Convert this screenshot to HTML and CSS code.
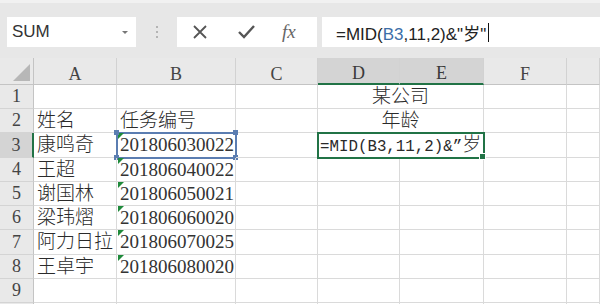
FILE: index.html
```html
<!DOCTYPE html>
<html lang="zh-CN">
<head>
    <meta charset="UTF-8">
    <title>SUM - Excel</title>
    <link rel="stylesheet" href="styles.css">
</head>
<body>
    <!-- Formula bar -->
    <div class="toolbar">
        <div class="name-box">
            <span>SUM</span>
            <span class="caret"></span>
        </div>
        <div class="grip"><i></i><i></i><i></i></div>
        <div class="fx-box">
            <svg width="14" height="14" viewBox="0 0 14 14"><path d="M1 1 L13 13 M13 1 L1 13" stroke="#555" stroke-width="1.8" fill="none"/></svg>
            <svg width="17" height="14" viewBox="0 0 17 14"><path d="M1 7 L6 12 L16 1" stroke="#555" stroke-width="2.4" fill="none"/></svg>
            <span class="fx">fx</span>
        </div>
        <div class="formula">
            <span>=MID(<span class="ref">B3</span>,11,2)&amp;"岁"</span><span class="cursor"></span>
        </div>
    </div>

    <!-- Sheet -->
    <div class="sheet">
        <div class="corner"><span class="tri"></span></div>
        <div class="col-head">A</div>
        <div class="col-head">B</div>
        <div class="col-head">C</div>
        <div class="col-head active">D</div>
        <div class="col-head active">E</div>
        <div class="col-head">F</div>
        <div class="col-head"></div>

        <div class="row-head">1</div>
        <div class="cell"></div><div class="cell"></div><div class="cell"></div>
        <div class="cell merged">某公司</div>
        <div class="cell"></div><div class="cell"></div>

        <div class="row-head">2</div>
        <div class="cell">姓名</div><div class="cell">任务编号</div><div class="cell"></div>
        <div class="cell merged">年龄</div>
        <div class="cell"></div><div class="cell"></div>

        <div class="row-head active">3</div>
        <div class="cell">康鸣奇</div>
        <div class="cell num ref-cell">201806030022<i class="h tl"></i><i class="h tr"></i><i class="h bl"></i><i class="h br"></i></div>
        <div class="cell"></div>
        <div class="cell merged editing"><span class="mono">=MID(B3,11,2)&amp;”</span>岁<i class="fill"></i></div>
        <div class="cell"></div><div class="cell"></div>

        <div class="row-head">4</div>
        <div class="cell">王超</div><div class="cell num">201806040022</div>
        <div class="cell"></div><div class="cell"></div><div class="cell"></div><div class="cell"></div><div class="cell"></div>

        <div class="row-head">5</div>
        <div class="cell">谢国林</div><div class="cell num">201806050021</div>
        <div class="cell"></div><div class="cell"></div><div class="cell"></div><div class="cell"></div><div class="cell"></div>

        <div class="row-head">6</div>
        <div class="cell">梁玮熠</div><div class="cell num">201806060020</div>
        <div class="cell"></div><div class="cell"></div><div class="cell"></div><div class="cell"></div><div class="cell"></div>

        <div class="row-head">7</div>
        <div class="cell">阿力日拉</div><div class="cell num">201806070025</div>
        <div class="cell"></div><div class="cell"></div><div class="cell"></div><div class="cell"></div><div class="cell"></div>

        <div class="row-head">8</div>
        <div class="cell">王卓宇</div><div class="cell num">201806080020</div>
        <div class="cell"></div><div class="cell"></div><div class="cell"></div><div class="cell"></div><div class="cell"></div>

        <div class="row-head">9</div>
        <div class="cell"></div><div class="cell"></div><div class="cell"></div><div class="cell"></div>
        <div class="cell"></div><div class="cell"></div><div class="cell"></div>

        <div class="row-head"></div>
        <div class="cell"></div><div class="cell"></div><div class="cell"></div><div class="cell"></div>
        <div class="cell"></div><div class="cell"></div><div class="cell"></div>
    </div>
</body>
</html>
```

FILE: styles.css
```css
/* Basic page */
html, body {
    overflow: hidden;
}

body {
    margin: 0;
    width: 600px;
    height: 304px;
    background-color: #ffffff;
    font-family: "Liberation Serif", "DejaVu Serif", "Noto Sans CJK SC", serif;
    color: #2a2a2a;
}

/* Formula bar */
.toolbar {
    height: 58px;
    box-sizing: border-box;
    padding-top: 14px;
    background-color: #e7e7e7;
    border-top: 3px solid #f1f1f1;
    display: flex;
    align-items: flex-start;
}

.name-box,
.fx-box,
.formula {
    height: 30px;
    background-color: #fff;
    box-sizing: border-box;
    display: flex;
    align-items: center;
}

.name-box {
    width: 129px;
    margin-left: 7px;
    padding: 0 8px 0 5px;
    justify-content: space-between;
    font-family: "Liberation Sans", sans-serif;
    font-size: 17px;
    color: #333;
}

.caret {
    width: 0;
    height: 0;
    border-left: 3px solid transparent;
    border-right: 3px solid transparent;
    border-top: 3px solid #777;
}

.grip {
    width: 41px;
    height: 30px;
    display: flex;
    flex-direction: column;
    align-items: center;
    justify-content: center;
    gap: 3px;
}

.grip i {
    width: 2px;
    height: 2px;
    background-color: #b4b4b4;
}

.fx-box {
    width: 140px;
    padding-left: 16px;
    gap: 31px;
}

.fx {
    font-family: "Liberation Serif", "DejaVu Serif", serif;
    font-style: italic;
    font-size: 19px;
    color: #666;
    margin-left: -4px;
}

.formula {
    flex: 1;
    margin-left: 5px;
    padding-left: 14px;
    font-family: "Liberation Sans", "Noto Sans CJK SC", sans-serif;
    font-size: 17px;
    color: #222;
    white-space: nowrap;
}

.formula .ref {
    color: #3c6ea8;
}

.cursor {
    width: 1px;
    height: 19px;
    margin-left: 2px;
    background-color: #111;
}

/* Sheet grid */
.sheet {
    display: grid;
    grid-template-columns: 34px 83px 119px 82px 82px 84px 83px 33px;
    grid-template-rows: 27px 24px 24px 25px 24px 24px 24px 25px 24px 24px 24px;
    height: 246px;
    overflow: hidden;
}

.corner,
.col-head,
.row-head {
    background-color: #e9e9e9;
    color: #444;
    font-size: 18px;
    box-sizing: border-box;
    display: flex;
    align-items: center;
    justify-content: center;
}

.corner {
    border-right: 1px solid #c4c4c4;
    border-bottom: 1px solid #c4c4c4;
    position: relative;
}

.corner .tri {
    position: absolute;
    right: 3px;
    bottom: 3px;
    width: 0;
    height: 0;
    border-left: 17px solid transparent;
    border-bottom: 17px solid #b7b7b7;
}

.col-head {
    border-right: 1px solid #d2d2d2;
    border-bottom: 1px solid #c4c4c4;
    padding-top: 6px;
}

.col-head.active {
    background-color: #d4d4d4;
    border-bottom: 2px solid #217346;
    color: #3a3a3a;
}

.row-head {
    border-right: 1px solid #c4c4c4;
    border-bottom: 1px solid #d4d4d4;
}

.row-head.active {
    background-color: #d4d4d4;
    border-right: 2px solid #217346;
}

.cell {
    box-sizing: border-box;
    border-right: 1px solid #dadada;
    border-bottom: 1px solid #dadada;
    padding-left: 3px;
    font-size: 19px;
    line-height: 23px;
    white-space: nowrap;
    position: relative;
    font-weight: 300;
}

.merged {
    grid-column: span 2;
    text-align: center;
    padding-left: 0;
}

/* Number stored as text: green triangle */
.num {
    font-weight: 400;
    color: #333;
}

.num::before {
    content: "";
    position: absolute;
    left: 1px;
    top: 0;
    width: 0;
    height: 0;
    border-top: 6px solid #1f8a3b;
    border-right: 6px solid transparent;
}

/* Range referenced by the formula */
.ref-cell {
    outline: 2px solid #5b7db1;
    outline-offset: -1px;
}

.ref-cell .h {
    position: absolute;
    width: 5px;
    height: 5px;
    background-color: #5b7db1;
}

.h.tl { left: -3px; top: -3px; }
.h.tr { right: -3px; top: -3px; }
.h.bl { left: -3px; bottom: -3px; }
.h.br { right: -3px; bottom: -3px; }

/* Cell being edited */
.editing {
    outline: 2px solid #217346;
    outline-offset: -1px;
    text-align: left;
    padding-left: 2px;
    z-index: 1;
}

.mono {
    font-family: "Liberation Mono", monospace;
    font-size: 15.8px;
    font-weight: 400;
}

.editing .fill {
    position: absolute;
    right: -3px;
    bottom: -3px;
    width: 5px;
    height: 5px;
    background-color: #217346;
    border: 1px solid #fff;
}
```
